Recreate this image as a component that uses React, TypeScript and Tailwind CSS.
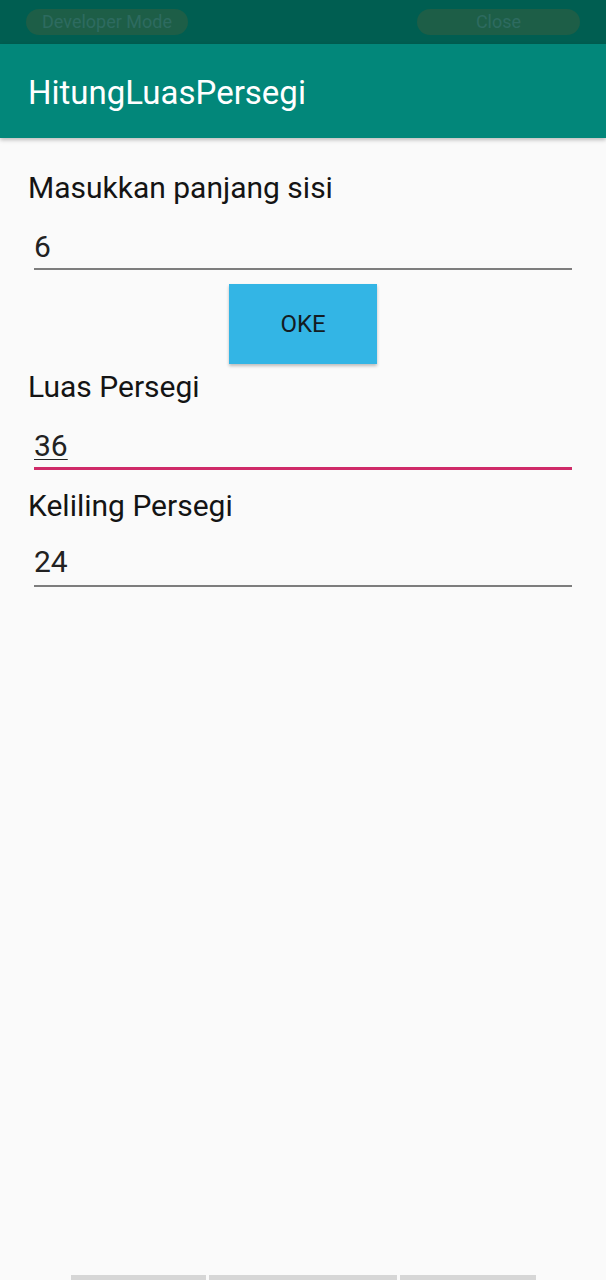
import React from "react";

export default function App() {
  const font = { fontFamily: "Roboto, 'Noto Sans', sans-serif" };
  return (
    <div className="w-[606px] h-[1280px] bg-[#fafafa] flex flex-col overflow-hidden" style={font}>
      {/* status bar */}
      <div className="h-[44px] bg-[#005e51] flex items-start justify-between pt-[9px] pl-[26px] pr-[26px]">
        <div className="w-[162px] h-[26px] rounded-full bg-[#1d5e47] flex items-center justify-center text-[18px] text-[#2d6b60] leading-none">
          Developer Mode
        </div>
        <div className="w-[163px] h-[26px] rounded-full bg-[#1d5e47] flex items-center justify-center text-[18px] text-[#2d6b60] leading-none">
          Close
        </div>
      </div>
      {/* app bar */}
      <div className="h-[94px] bg-[#02877a] pt-[31px] pl-[28px] shadow-[0_2px_4px_rgba(0,0,0,0.25)] relative z-10">
        <div className="text-[33px] leading-[36px] text-white">HitungLuasPersegi</div>
      </div>
      {/* content */}
      <div className="flex-1 flex flex-col pl-[28px] pr-[34px] pt-[35px]">
        <div className="text-[30px] leading-[30px] text-[#141414]">Masukkan panjang sisi</div>
        <div className="ml-[6px] mt-[29px] pb-[6px] border-b-2 border-[#7d7d7d] text-[30px] leading-[30px] text-[#222]">
          6
        </div>
        <div className="flex justify-center mt-[14px] pl-[6px]">
          <div className="w-[148px] h-[80px] bg-[#33b5e5] shadow-[0_2px_3px_rgba(0,0,0,0.25)] flex items-center justify-center text-[24px] text-[#141c22]">
            OKE
          </div>
        </div>
        <div className="mt-[8px] text-[30px] leading-[30px] text-[#141414]">Luas Persegi</div>
        <div className="ml-[6px] mt-[29px] pb-[6px] border-b-[3px] border-[#cf2a68] text-[30px] leading-[30px] text-[#222]">
          <span className="underline decoration-1 underline-offset-[3px]">36</span>
        </div>
        <div className="mt-[21px] text-[30px] leading-[30px] text-[#141414]">Keliling Persegi</div>
        <div className="ml-[6px] mt-[26px] pb-[8px] border-b-2 border-[#7d7d7d] text-[30px] leading-[30px] text-[#222]">
          24
        </div>
      </div>
      {/* bottom bars */}
      <div className="h-[5px] flex pl-[71px] gap-[3px]">
        <div className="w-[135px] bg-[#d6d6d6]" />
        <div className="w-[188px] bg-[#d6d6d6]" />
        <div className="w-[136px] bg-[#d6d6d6]" />
      </div>
    </div>
  );
}
